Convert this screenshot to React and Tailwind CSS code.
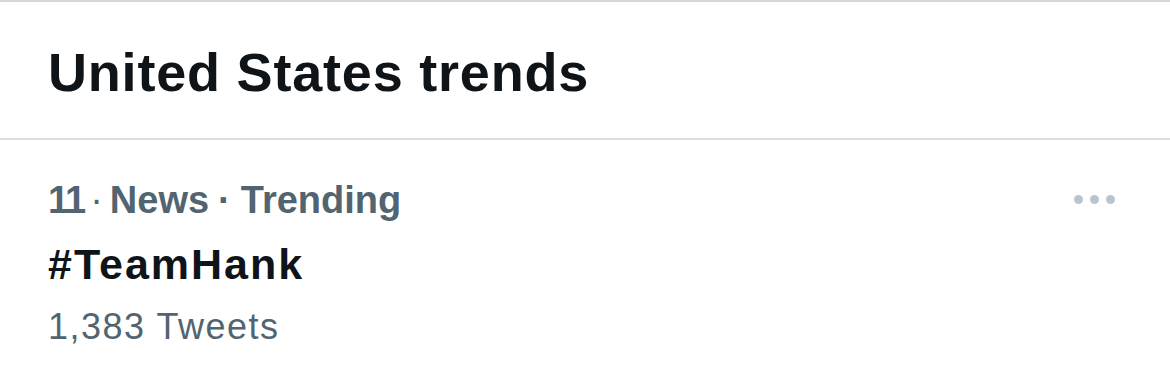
export default function App() {
  return (
    <div className="w-[1170px] h-[386px] bg-white overflow-hidden" style={{ fontFamily: '"Liberation Sans", Arial, sans-serif' }}>
      <div className="border-t-2 border-[#d4d7da] h-[138px] pt-[43px] px-[48px]">
        <h2 className="text-[54px] font-bold text-[#0f1419] leading-none tracking-[0.8px]">United States trends</h2>
      </div>
      <div className="border-t-2 border-[#dcdcdc] flex justify-between px-[48px] pt-[41px]">
        <div className="flex flex-col">
          <div className="text-[38px] font-bold text-[#536471] leading-none flex items-baseline">
            <span className="tracking-[-2px]">11</span>
            <span className="ml-[6px] font-normal">·</span>
            <span className="ml-[7px]">News</span>
            <span className="ml-[9px]">·</span>
            <span className="ml-[10px]">Trending</span>
          </div>
          <div className="text-[43px] font-bold text-[#0f1419] leading-none tracking-[2px] mt-[24px]">#TeamHank</div>
          <div className="text-[36px] text-[#536471] leading-none tracking-[1.5px] mt-[23px]">1,383 Tweets</div>
        </div>
        <div className="flex gap-[7px] mt-[14px] mr-[7px]">
          <span className="w-[9px] h-[9px] rounded-full bg-[#bac4cd]"></span>
          <span className="w-[9px] h-[9px] rounded-full bg-[#bac4cd]"></span>
          <span className="w-[9px] h-[9px] rounded-full bg-[#bac4cd]"></span>
        </div>
      </div>
    </div>
  );
}
